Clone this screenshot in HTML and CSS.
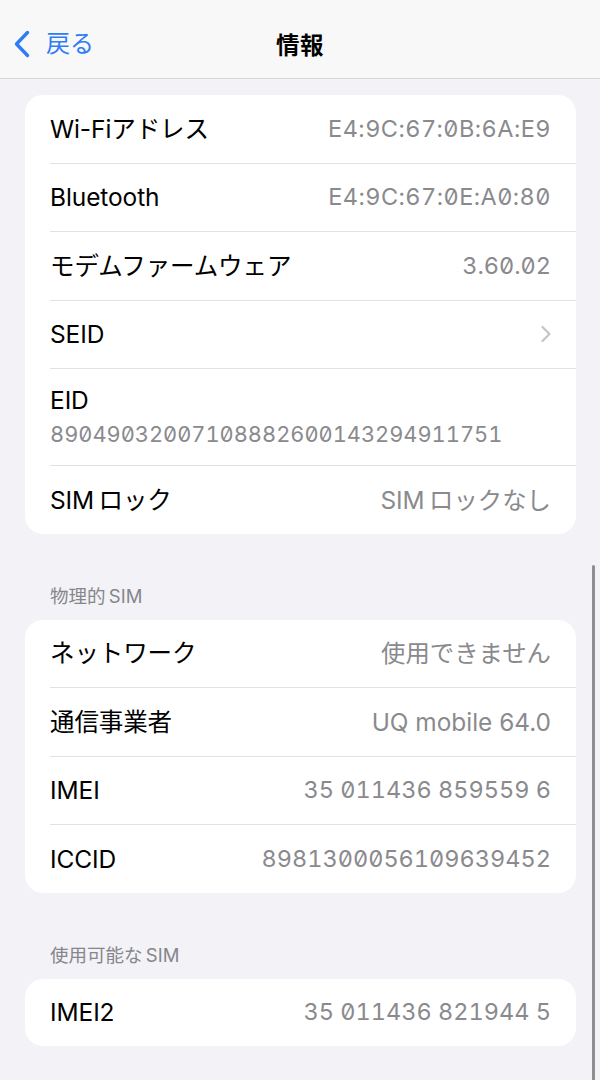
FILE: index.html
```html
<!DOCTYPE html>
<html lang="ja">
<head>
<meta charset="utf-8">
<title>情報</title>
<link rel="stylesheet" href="styles.css">
</head>
<body>
<header class="nav">
  <div class="back">
    <svg class="back-icon" width="18" height="28" viewBox="0 0 18 28"><path d="M14.5 2.5 L3.5 14 L14.5 25.5" fill="none" stroke="#2f7cf6" stroke-width="3.4" stroke-linecap="round" stroke-linejoin="round"/></svg>
    <span class="back-text">戻る</span>
  </div>
  <div class="title">情報</div>
</header>
<main class="content">
  <section class="card first">
    <div class="row"><div class="inner"><span class="label">Wi-Fiアドレス</span><span class="value num mac">E4:9C:67:0B:6A:E9</span></div></div>
    <div class="row"><div class="inner"><span class="label">Bluetooth</span><span class="value num mac">E4:9C:67:0E:A0:80</span></div></div>
    <div class="row"><div class="inner"><span class="label">モデムファームウェア</span><span class="value num">3.60.02</span></div></div>
    <div class="row"><div class="inner"><span class="label">SEID</span><svg class="chev" width="12" height="18" viewBox="0 0 12 18"><path d="M2.5 2 L9.5 9 L2.5 16" fill="none" stroke="#c4c4c7" stroke-width="2.2" stroke-linecap="round" stroke-linejoin="round"/></svg></div></div>
    <div class="row tall"><div class="inner stack"><span class="label">EID</span><span class="value num sub">89049032007108882600143294911751</span></div></div>
    <div class="row last"><div class="inner"><span class="label">SIM&#8201;ロック</span><span class="value">SIM&#8201;ロックなし</span></div></div>
  </section>
  <h2 class="section-title">物理的&#8201;SIM</h2>
  <section class="card">
    <div class="row"><div class="inner"><span class="label">ネットワーク</span><span class="value">使用できません</span></div></div>
    <div class="row"><div class="inner"><span class="label">通信事業者</span><span class="value">UQ mobile 64.0</span></div></div>
    <div class="row"><div class="inner"><span class="label">IMEI</span><span class="value num">35 011436 859559 6</span></div></div>
    <div class="row last"><div class="inner"><span class="label">ICCID</span><span class="value num">8981300056109639452</span></div></div>
  </section>
  <h2 class="section-title">使用可能な&#8201;SIM</h2>
  <section class="card">
    <div class="row last"><div class="inner"><span class="label">IMEI2</span><span class="value num">35 011436 821944 5</span></div></div>
  </section>
</main>
<div class="scrollbar"></div>
</body>
</html>
```
FILE: styles.css
```css
html, body {
  margin: 0;
  padding: 0;
}
body {
  width: 600px;
  height: 1080px;
  overflow: hidden;
  background: #f2f2f7;
  font-family: "Inter", "Noto Sans CJK JP", sans-serif;
  color: #000;
  position: relative;
}
.nav {
  height: 78px;
  background: #f8f8f8;
  border-bottom: 1px solid #d6d6d9;
  display: flex;
  align-items: center;
  justify-content: center;
  position: relative;
}
.back {
  position: absolute;
  left: 13px;
  top: 30px;
  display: flex;
  align-items: center;
  gap: 15px;
  color: #2f7cf6;
}
.back-text {
  font-size: 24px;
  line-height: 28px;
}
.title {
  font-size: 23.5px;
  font-weight: 700;
  padding-top: 10px;
  letter-spacing: 0.5px;
}
.content {
  padding: 16px 24px 0 25px;
}
.card {
  background: #fff;
  border-radius: 18px;
  overflow: hidden;
}
.row {
  padding-left: 25px;
}
.inner {
  height: 67.5px;
  border-bottom: 1px solid #e2e2e5;
  padding-right: 25px;
  display: flex;
  align-items: center;
  justify-content: space-between;
}
.row.last .inner {
  border-bottom: none;
}
.row.tall .inner {
  height: 96px;
}
.inner.stack {
  flex-direction: column;
  align-items: flex-start;
  justify-content: center;
  gap: 6px;
}
.label {
  font-size: 24.5px;
  line-height: 28px;
  letter-spacing: -0.1px;
}
.value {
  font-size: 24.4px;
  line-height: 28px;
  color: #8a8a8e;
}
.value.num {
  font-size: 23.5px;
  font-feature-settings: "tnum" 1, "zero" 1;
}
.value.num.mac {
  letter-spacing: 0.45px;
}
.value.num.sub {
  font-size: 21.8px;
}
.chev {
  margin-right: -1px;
}
.section-title {
  margin: 50px 0 0 25px;
  height: 36px;
  font-size: 18.5px;
  font-weight: 400;
  line-height: 24px;
  color: #86868b;
}
.scrollbar {
  position: absolute;
  right: 5px;
  top: 565px;
  width: 3px;
  height: 530px;
  border-radius: 2px;
  background: #8e8e93;
}
```
